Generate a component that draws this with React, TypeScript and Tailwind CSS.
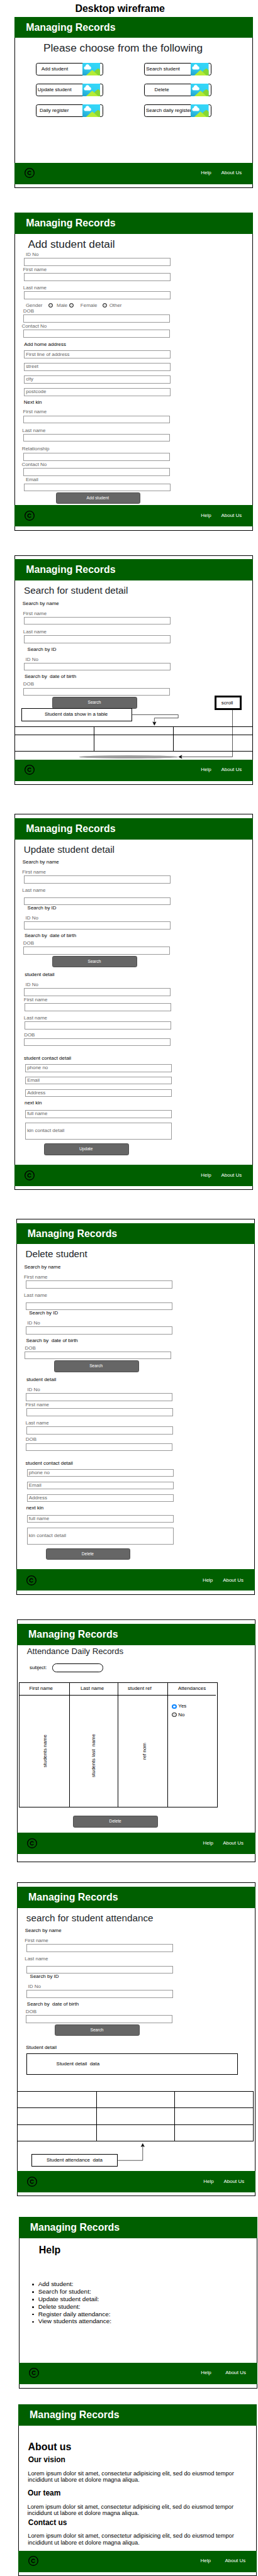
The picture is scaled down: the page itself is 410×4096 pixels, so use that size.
import type { ReactNode } from "react";

type BoxProps = { className?: string; children?: ReactNode };

function Heading({ className = "", children }: BoxProps) {
  return (
    <h2 className={`h-[30px] shrink-0 leading-[30px] whitespace-nowrap text-[#212529] ${className}`}>
      {children}
    </h2>
  );
}

function Label({ className = "", children }: BoxProps) {
  return (
    <div className={`h-3 shrink-0 text-xs leading-[12px] whitespace-pre ${className}`}>{children}</div>
  );
}

function Field({ className = "", children }: BoxProps) {
  return (
    <div
      className={`flex w-[351px] shrink-0 items-center border border-[#999] pl-[3px] text-xs leading-[12px] text-[#666] ${className}`}
    >
      {children}
    </div>
  );
}

function Button({ className = "", children }: BoxProps) {
  return (
    <div
      className={`flex h-7 w-[203px] shrink-0 items-center justify-center rounded border border-[#4d4d4d] bg-[#666] pr-0.5 text-[10px] leading-none text-white ${className}`}
    >
      {children}
    </div>
  );
}

function Radio({ className = "" }: { className?: string }) {
  return <span className={`size-[11px] shrink-0 rounded-full ${className}`} />;
}

function Copyright() {
  return (
    <svg viewBox="0 0 24 24" className="ml-6 size-6 shrink-0" fill="none" stroke="#000">
      <circle cx="12" cy="12" r="11" strokeWidth="2" />
      <path d="M15.4 9.9 A4.1 4.1 0 1 0 15.4 14.1" strokeWidth="2.2" />
    </svg>
  );
}

function Landscape() {
  return (
    <svg viewBox="0 0 43 30" className="h-[30px] w-[43px]" preserveAspectRatio="none">
      <defs>
        <linearGradient id="sky" x1="0.1" y1="1" x2="0.6" y2="0">
          <stop offset="0" stopColor="#22a5d0" />
          <stop offset="0.6" stopColor="#33d0f3" />
          <stop offset="1" stopColor="#33d6f8" />
        </linearGradient>
      </defs>
      <rect width="43" height="30" rx="1" fill="url(#sky)" />
      <path
        d="M7.5 16 C2.5 16 2.2 8.8 7.4 8.3 C7.6 2 15.8 1.6 17 8 C21.8 8.4 22.2 16 17.6 16 Z"
        fill="#fff"
      />
      <path d="M25 30 L30 19 L35.2 14.6 Q37.6 12.6 40 14.8 L43 17.6 V29 Q43 30 42 30 Z" fill="#86d733" />
      <path d="M8.7 30 L21.6 18.4 Q23.6 16.6 25.4 18.4 L38 30 Z" fill="#b4ec36" />
    </svg>
  );
}

type PanelProps = {
  className: string;
  strip?: boolean;
  body: string;
  footer: string;
  help?: string;
  about?: string;
  bottom?: string;
  children: ReactNode;
};

function Panel({
  className,
  strip = false,
  body,
  footer,
  help = "ml-[398px]",
  about = "ml-[24px]",
  bottom = "h-[10px]",
  children,
}: PanelProps) {
  return (
    <section className={`flex w-[571px] shrink-0 flex-col ${className}`}>
      {strip && <div className="h-[10px] shrink-0 border-x border-t border-black" />}
      <header className="flex h-[51px] shrink-0 items-center bg-[#005f00] pl-[27px]">
        <h1 className="text-2xl leading-none font-bold whitespace-nowrap text-white">Managing Records</h1>
      </header>
      <div className={`relative flex shrink-0 flex-col items-start border-x border-black ${body}`}>{children}</div>
      <footer className={`flex h-[51px] shrink-0 items-start bg-[#005f00] text-xs text-white ${footer}`}>
        <Copyright />
        <span className={`leading-[24px] ${help}`}>Help</span>
        <span className={`leading-[25px] whitespace-nowrap ${about}`}>About Us</span>
      </footer>
      <div className={`shrink-0 border-x border-b border-black ${bottom}`} />
    </section>
  );
}

function Tile({ pad, children }: { pad: string; children: ReactNode }) {
  return (
    <div className="relative flex h-[31px] w-[161px] items-center rounded-[5px] border border-black">
      <span className={`text-xs leading-none whitespace-nowrap ${pad}`}>{children}</span>
      <span className="absolute -top-px left-[110px]">
        <Landscape />
      </span>
    </div>
  );
}

function SearchForm({ title }: { title: string }) {
  return (
    <>
      <Heading className="mt-[9px] ml-[20.5px] text-[23px]">{title}</Heading>
      <Label className="mt-2.5 ml-[17.4px]">Search by name</Label>
      <Label className="mt-3 ml-[16.6px] text-[#666]">First name</Label>
      <Field className="mt-0.5 ml-[21px] h-[19px]" />
      <Label className="mt-[11px] ml-[16.6px] text-[#666]">Last name</Label>
      <Field className="mt-2.5 ml-[21px] h-[19px]" />
      <Label className="mt-px ml-[29.2px]">Search by ID</Label>
      <Label className="mt-3 ml-[24.7px] text-[#666]">ID No</Label>
      <Field className="mt-0.5 ml-[21px] h-[19px]" />
      <Label className="mt-[9px] ml-[22.1px]">{"Search by  date of birth"}</Label>
      <Label className="mt-1.5 ml-[19px] text-[#666]">DOB</Label>
      <Field className="mt-0.5 ml-[19px] h-[19px]" />
      <Button className="mt-[3px] ml-[89px]">Search</Button>
    </>
  );
}

function StudentRecordForm({ title, action }: { title: string; action: string }) {
  return (
    <>
      <SearchForm title={title} />
      <Label className="mt-3 ml-[22.6px]">student detail</Label>
      <Label className="mt-3 ml-[24.7px] text-[#666]">ID No</Label>
      <Field className="mt-0.5 ml-[21px] h-[19px]" />
      <Label className="mt-[3px] ml-[20.5px] text-[#666]">First name</Label>
      <Field className="mt-0.5 ml-[23px] h-[19px]" />
      <Label className="mt-[11px] ml-[20.5px] text-[#666]">Last name</Label>
      <Field className="mt-0.5 ml-[23px] h-[19px]" />
      <Label className="mt-[7px] ml-[21px] text-[#666]">DOB</Label>
      <Field className="mt-0.5 ml-[21px] h-[19px]" />
      <Label className="mt-[23px] ml-[20.7px]">student contact detail</Label>
      <Field className="mt-2 ml-6 h-[19px]">phone no</Field>
      <Field className="mt-[11px] ml-6 h-[19px]">Email</Field>
      <Field className="mt-[11px] ml-6 h-[19px]">Address</Field>
      <Label className="mt-[9px] ml-[22.3px]">next kin</Label>
      <Field className="mt-2.5 ml-6 h-[19px]">full name</Field>
      <Field className="mt-[11px] ml-6 h-[41px]">kin contact detail</Field>
      <Button className="mt-[9px] ml-[69px]">{action}</Button>
    </>
  );
}

function HomePanel() {
  return (
    <Panel className="ml-[35px]" body="h-[299px]" footer="pt-3">
      <Heading className="mt-2.5 ml-[67.5px] text-[26px]">Please choose from the following</Heading>
      <div className="mt-[19px] ml-[49px] grid grid-cols-[161px_161px] gap-x-[99px] gap-y-[19px]">
        <Tile pad="pl-[12px]">Add student</Tile>
        <Tile pad="pl-[3px]">Search student</Tile>
        <Tile pad="pl-[3px]">Update student</Tile>
        <Tile pad="pl-[23px]">Delete</Tile>
        <Tile pad="pl-[8px]">Daily register</Tile>
        <Tile pad="pl-[2.5px]">Search daily register</Tile>
      </div>
    </Panel>
  );
}

function AddPanel() {
  return (
    <Panel className="mt-[59px] ml-[35px]" body="h-[649px]" footer="pt-[13px]">
      <Heading className="mt-2.5 mb-px ml-[30.5px] text-[26px]">Add student detail</Heading>
      <Label className="mt-0.5 ml-[25.4px] text-[#666]">ID No</Label>
      <Field className="mt-0.5 ml-[21px] h-[19px]" />
      <Label className="mt-[3px] ml-[18.5px] text-[#666]">First name</Label>
      <Field className="mt-0.5 ml-[21px] h-[19px]" />
      <Label className="mt-[11px] ml-[19px] text-[#666]">Last name</Label>
      <Field className="mt-0.5 ml-[21px] h-[19px]" />
      <div className="mt-[9px] ml-[25.2px] flex h-3 items-center text-xs leading-[12px] text-[#666]">
        <span className="w-[54px]">Gender</span>
        <Radio className="border border-black bg-[#e0e0e0]" />
        <span className="ml-[9px] w-[30px]">Male</span>
        <Radio className="border border-black bg-[#e0e0e0]" />
        <span className="ml-[16px] w-[53px]">Female</span>
        <Radio className="border border-black bg-[#e0e0e0]" />
        <span className="ml-[5px]">Other</span>
      </div>
      <Label className="mt-0.5 ml-[19px] text-[#666]">DOB</Label>
      <Field className="mt-0.5 ml-[19px] h-[19px]" />
      <Label className="mt-[3px] ml-[15.4px] text-[#666]">Contact No</Label>
      <Field className="mt-0.5 ml-[19px] h-[19px]" />
      <Label className="mt-[11px] ml-[21px]">Add home address</Label>
      <Field className="mt-2 ml-[21px] h-[19px]">First line of address</Field>
      <Field className="mt-[11px] ml-[21px] h-[19px]">street</Field>
      <Field className="mt-[11px] ml-[21px] h-[19px]">city</Field>
      <Field className="mt-[11px] ml-[21px] h-[19px]">postcode</Field>
      <Label className="mt-[9px] ml-[20.5px]">Next kin</Label>
      <Label className="mt-3 ml-[18.5px] text-[#666]">First name</Label>
      <Field className="mt-0.5 ml-[19px] h-[19px]" />
      <Label className="mt-[11px] ml-[16.6px] text-[#666]">Last name</Label>
      <Field className="mt-0.5 ml-[19px] h-[19px]" />
      <Label className="mt-[11px] ml-[15.8px] text-[#666]">Relationship</Label>
      <Field className="mt-1 ml-[19px] h-[19px]" />
      <Label className="mt-[3px] ml-[15.4px] text-[#666]">Contact No</Label>
      <Field className="mt-0.5 ml-[19px] h-[19px]" />
      <Label className="mt-[3px] ml-[25.2px] text-[#666]">Email</Label>
      <Field className="mt-[3px] ml-[21px] h-[19px]" />
      <Button className="mt-0.5 ml-[97px]">Add student</Button>
    </Panel>
  );
}

function SearchPanel() {
  return (
    <Panel className="mt-[59px] ml-[35px]" strip body="h-[429px]" footer="pt-3">
      <Heading className="mt-[9px] ml-[20.8px] text-[23px]">Search for student detail</Heading>
      <Label className="mt-2.5 ml-[17.4px]">Search by name</Label>
      <Label className="mt-3 ml-[18.5px] text-[#666]">First name</Label>
      <Field className="mt-0.5 ml-[21px] h-[19px]" />
      <Label className="mt-[11px] ml-[19px] text-[#666]">Last name</Label>
      <Field className="mt-0.5 ml-[21px] h-[19px]" />
      <Label className="mt-[9px] ml-[29.2px]">Search by ID</Label>
      <Label className="mt-3 ml-[24.7px] text-[#666]">ID No</Label>
      <Field className="mt-0.5 ml-[21px] h-[19px]" />
      <Label className="mt-[9px] ml-[22.1px]">{"Search by  date of birth"}</Label>
      <Label className="mt-1.5 ml-[19px] text-[#666]">DOB</Label>
      <Field className="mt-0.5 ml-[19px] h-[19px]" />
      <Button className="mt-[3px] ml-[89px]">Search</Button>
      <div className="-mt-px ml-[14px] flex h-[31px] w-[266px] shrink-0 items-center justify-center border border-black bg-white pr-[2px] text-xs leading-none">
        Student data show in a table
      </div>
      <div className="mt-3 flex w-full shrink-0 flex-col border-b border-black">
        <div className="grid h-5 grid-cols-[190px_190px_1fr] border-t border-black">
          <div className="border-r border-black" />
          <div className="border-r border-black" />
        </div>
        <div className="grid h-10 grid-cols-[190px_190px_1fr] border-t border-black">
          <div className="border-r border-black" />
          <div className="border-r border-black" />
        </div>
      </div>
      <div className="mt-[9px] ml-[153px] h-[7px] w-[237px] shrink-0 rounded-[50%] bg-[#9c9c9c]" />
      <svg viewBox="0 0 571 429" className="absolute top-0 -left-px h-[429px] w-[571px]" fill="none" stroke="#000">
        <path d="M280.5 321.5 H390.5 V329.5 H333.5 V343" />
        <path d="M333.5 347 L329.6 338.6 L333.5 340.6 L337.4 338.6 Z" fill="#000" strokeWidth="0.8" />
        <path d="M520.5 309 V422.5 H396" />
        <path d="M391.5 422.5 L399.5 418.6 L397.5 422.5 L399.5 426.4 Z" fill="#000" strokeWidth="0.8" />
      </svg>
      <div className="absolute top-[276px] left-[478px] flex h-[34px] w-[64px] items-center justify-center border-[4.6px] border-black bg-white pr-[5px] text-xs leading-none">
        scroll
      </div>
    </Panel>
  );
}

function UpdatePanel() {
  return (
    <Panel className="mt-[69px] ml-[35px]" strip body="h-[779px]" footer="pt-[14px]">
      <StudentRecordForm title="Update student detail" action="Update" />
    </Panel>
  );
}

function DeletePanel() {
  return (
    <Panel className="mt-[69px] ml-[39px]" strip body="h-[779px]" footer="pt-[14px]">
      <StudentRecordForm title="Delete student" action="Delete" />
    </Panel>
  );
}

function RegisterColumn({ width, title, children }: { width: string; title: ReactNode; children: ReactNode }) {
  return (
    <div className={`flex shrink-0 flex-col border-r border-black ${width}`}>
      {title}
      {children}
    </div>
  );
}

function RegisterPanel() {
  const head = "flex h-[30px] shrink-0 items-center justify-center border-b border-black";
  const upright = "rotate-180 whitespace-pre leading-[14px] [writing-mode:vertical-rl]";
  return (
    <Panel
      className="mt-[59px] ml-[41px]"
      strip
      body="h-[450px]"
      footer="pt-[13px]"
      help="ml-[397px]"
      about="ml-[23px]"
      bottom="h-[19px]"
    >
      <h2 className="mt-[3px] ml-[21.8px] h-6 shrink-0 text-xl leading-[24px] whitespace-nowrap text-[#212529]">
        Attendance Daily Records
      </h2>
      <div className="mt-[17px] ml-[28.4px] flex h-[21px] shrink-0 items-center text-xs leading-none">
        <span className="w-[54.6px]">subject:</span>
        <span className="h-[21px] w-[121px] rounded-[10px] border border-black" />
      </div>
      <div className="mt-6 ml-[3px] flex h-[301px] shrink-0 border-y border-l border-black text-xs leading-none">
        <RegisterColumn width="w-[120px]" title={<div className={`${head} pr-[16px]`}>First name</div>}>
          <div className="flex h-[269px] items-center justify-center pl-[3px]">
            <span className={upright}>students name</span>
          </div>
        </RegisterColumn>
        <RegisterColumn width="w-[116px]" title={<div className={`${head} pr-[7px]`}>Last name</div>}>
          <div className="flex h-[269px] items-center justify-center pt-[20px] pr-[2px]">
            <span className={upright}>{"students last  name"}</span>
          </div>
        </RegisterColumn>
        <RegisterColumn width="w-[120px]" title={<div className={`${head} pr-[16px]`}>student ref</div>}>
          <div className="flex h-[269px] items-center justify-center pl-[9px]">
            <span className={upright}>ref nom</span>
          </div>
        </RegisterColumn>
        <RegisterColumn width="w-[119px]" title={<div className={`${head} mr-[4px]`}>Attendances</div>}>
          <div className="mt-[20px] ml-[9px] flex h-[14px] items-center gap-[4px]">
            <Radio className="border-4 border-[#0a84ff] bg-white" />
            <span>Yes</span>
          </div>
          <div className="mt-[6px] ml-[9px] flex h-[14px] items-center gap-[4px]">
            <Radio className="border border-black bg-[#e0e0e0]" />
            <span>No</span>
          </div>
        </RegisterColumn>
      </div>
      <Button className="mt-[19px] ml-[133px]">Delete</Button>
    </Panel>
  );
}

function AttendanceRow() {
  return (
    <div className="grid h-10 grid-cols-[189px_187px_1fr] border-t border-black">
      <div className="border-r border-black" />
      <div className="border-r border-black" />
    </div>
  );
}

function AttendancePanel() {
  return (
    <Panel className="mt-[49px] ml-[41px]" strip body="h-[630px]" footer="pt-[14px]">
      <SearchForm title="search for student attendance" />
      <Label className="mt-[22px] ml-[19.7px]">Student detail</Label>
      <div className="mt-2 ml-[21px] flex h-[51px] w-[506px] shrink-0 items-center border border-black pl-[70px] text-xs leading-none whitespace-pre">
        {"Student detail  data"}
      </div>
      <div className="mt-[39px] flex w-[564px] shrink-0 flex-col border-r border-b border-black">
        <AttendanceRow />
        <AttendanceRow />
        <AttendanceRow />
      </div>
      <div className="mt-[29px] ml-[33px] flex h-[31px] w-[206px] shrink-0 items-center justify-center border border-black text-xs leading-none whitespace-pre">
        {"Student attendance  data"}
      </div>
      <svg viewBox="0 0 571 630" className="absolute top-0 -left-px h-[630px] w-[571px]" fill="none" stroke="#000">
        <path d="M240 604.5 H299.5 V568" />
        <path d="M299.5 564 L295.6 571.6 L299.5 570 L303.4 571.6 Z" fill="#000" strokeWidth="0.8" />
      </svg>
    </Panel>
  );
}

const helpTopics = [
  "Add student:",
  "Search for student:",
  "Update student detail:",
  "Delete student:",
  "Register daily attendance:",
  "View students attendance:",
];

function HelpPanel() {
  return (
    <Panel className="mt-[49px] ml-[45px]" body="h-[299px]" footer="pt-3" help="ml-[388px]" about="ml-[34px]">
      <h2 className="mt-[14px] ml-[46.7px] h-[30px] shrink-0 text-2xl leading-[30px] font-bold">Help</h2>
      <ul className="mt-[57px] ml-[31px] shrink-0 text-[15px] leading-[18px]">
        {helpTopics.map((topic) => (
          <li key={topic} className="flex items-center whitespace-nowrap">
            <span className="mt-[2px] mr-[10px] size-1 rounded-full bg-black" />
            {topic}
          </li>
        ))}
      </ul>
    </Panel>
  );
}

function AboutSection({ title, head, text }: { title: string; head: string; text: string }) {
  return (
    <>
      <h3 className={`h-5 shrink-0 text-lg leading-[20px] font-bold whitespace-nowrap ${head}`}>{title}</h3>
      <p className={`mt-[14px] shrink-0 text-sm leading-[16px] whitespace-nowrap ${text}`}>
        Lorem ipsum dolor sit amet, consectetur adipisicing elit, sed do eiusmod tempor
        <br />
        incididunt ut labore et dolore magna aliqua.
      </p>
    </>
  );
}

function AboutPanel() {
  return (
    <Panel className="mt-[39px] ml-[44px]" body="h-[299px]" footer="pt-3" help="ml-[388px]" about="ml-[34px]">
      <h2 className="mt-[35px] ml-[21.5px] h-[30px] shrink-0 text-2xl leading-[30px] font-bold">About us</h2>
      <AboutSection title="Our vision" head="mt-[7px] ml-[22px]" text="ml-[21.2px]" />
      <AboutSection title="Our team" head="mt-[14px] ml-[20.7px]" text="ml-[20px]" />
      <AboutSection title="Contact us" head="mt-[4px] ml-[22px]" text="ml-[21.2px]" />
    </Panel>
  );
}

export default function App() {
  return (
    <div className="h-[4096px] w-[410px] overflow-hidden bg-white">
      <main className="flex h-[6171px] w-[617px] flex-col items-start bg-white font-['Liberation_Sans',Arial,sans-serif] text-black [zoom:0.66375]">
        <h1 className="ml-[180px] h-10 shrink-0 text-2xl leading-[41px] font-bold whitespace-nowrap">
          Desktop wireframe
        </h1>
        <HomePanel />
        <AddPanel />
        <SearchPanel />
        <UpdatePanel />
        <DeletePanel />
        <RegisterPanel />
        <AttendancePanel />
        <HelpPanel />
        <AboutPanel />
      </main>
    </div>
  );
}
